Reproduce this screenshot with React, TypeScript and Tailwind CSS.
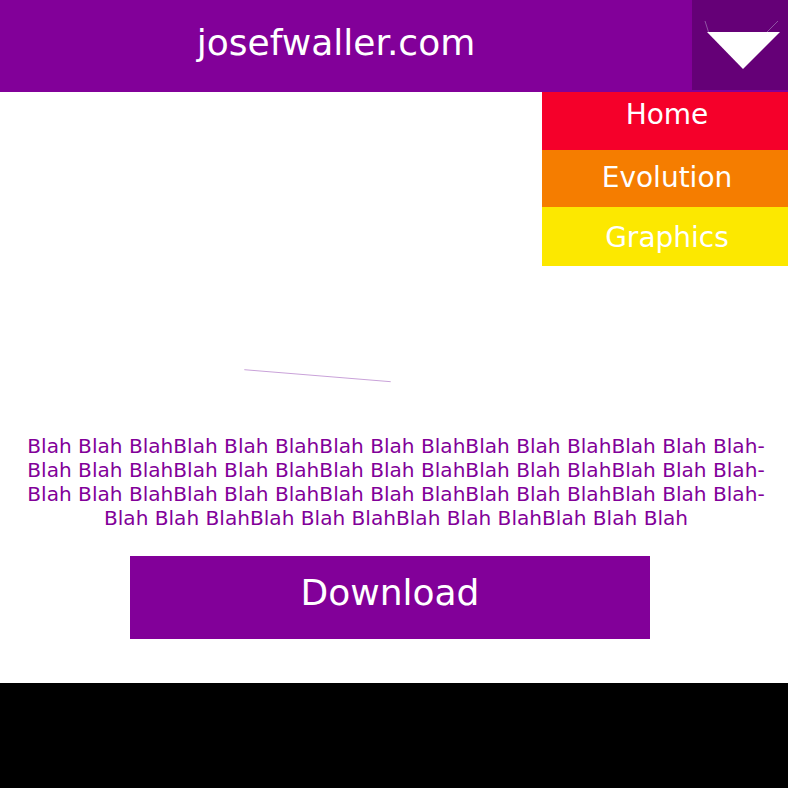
import React from "react";

const blah = Array.from({ length: 19 }, () => "Blah Blah Blah").join("\u00AD");

export default function App() {
  return (
    <div
      className="relative w-full bg-white"
      style={{ fontFamily: '"DejaVu Sans", Verdana, sans-serif' }}
    >
      <header className="flex h-[92px] bg-[#820099]">
        <div className="flex flex-1 items-center justify-center pr-[20px] pb-[6px] text-[36px] text-white">
          josefwaller.com
        </div>
        <div className="h-[90px] w-[96px] bg-[#650077]">
          <svg width="96" height="90" viewBox="0 0 96 90">
            <line x1="13" y1="21" x2="16.5" y2="32" stroke="#9a6aae" strokeWidth="0.8" />
            <line x1="86" y1="21" x2="75" y2="32" stroke="#9a6aae" strokeWidth="0.8" />
            <polygon points="15,32 88,32 51,69" fill="#ffffff" />
          </svg>
        </div>
      </header>

      <nav className="absolute right-0 top-[92px] flex w-[246px] flex-col text-[28px] text-white">
        <div className="flex h-[57.5px] items-center justify-center bg-[#f5002a] pl-[4px] pb-[11px]">Home</div>
        <div className="flex h-[57.5px] items-center justify-center bg-[#f57d00] pl-[4px]">Evolution</div>
        <div className="flex h-[59px] items-center justify-center bg-[#fce800] pl-[4px] pt-[3px]">Graphics</div>
      </nav>

      <main>
        <div className="h-[342px]">
          <svg width="788" height="342" viewBox="0 0 788 342" className="block">
            <line x1="244.3" y1="277.7" x2="390.7" y2="289.7" stroke="#c9a2d9" strokeWidth="1" />
          </svg>
        </div>
        <p className="pl-[22px] pr-[18px] text-center text-[20.1px] leading-[24px] text-[#820099]">
          {blah}
        </p>
        <div className="mt-[26px] mb-[44px] flex">
          <button className="ml-[130px] flex h-[83px] w-[520px] items-center justify-center bg-[#820099] pb-[9px] text-[36px] text-white">
            Download
          </button>
        </div>
      </main>

      <footer className="h-[105px] bg-black" />
    </div>
  );
}
